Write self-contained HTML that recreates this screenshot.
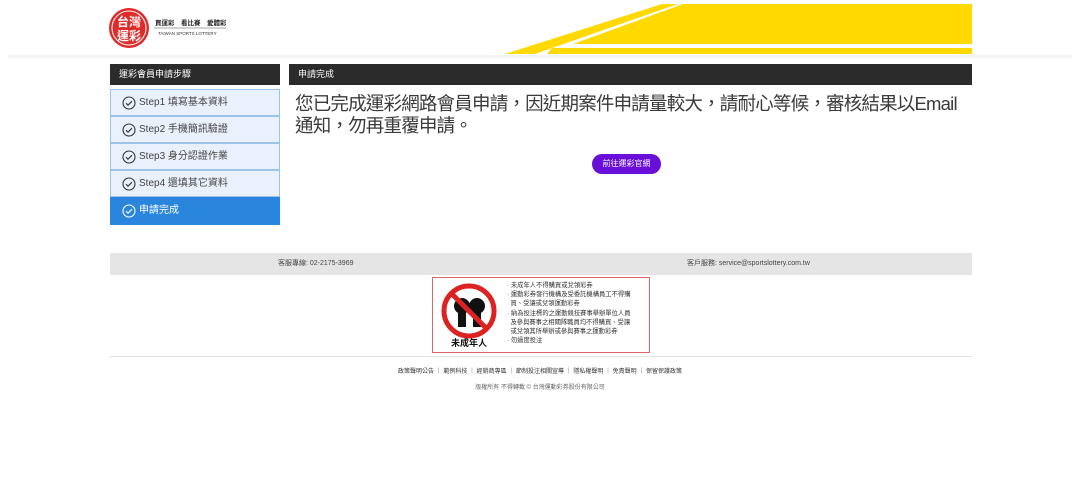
<!DOCTYPE html>
<html><head><meta charset="utf-8"><style>
*{margin:0;padding:0;box-sizing:border-box}
body{width:1080px;height:500px;background:#fff;font-family:"Liberation Sans","Noto Sans CJK TC",sans-serif;position:relative;overflow:hidden;color:#333}
.abs{position:absolute}
.hdrline{left:8px;top:55px;width:1064px;height:3px;background:#f3f3f3}
.bar{background:#2b2b2b;color:#fff;font-size:9px;line-height:21px;padding-left:9px}
.step{position:absolute;left:110px;width:170px;height:27px;background:#e9f2fc;border:1px solid #9cc3e8;font-size:10px;color:#444;line-height:26px;padding-left:28px}
.step svg{position:absolute;left:11px;top:6px}
.step.act{background:#2a86dc;color:#fff;border-color:#2a86dc}
.msg{left:295px;top:93px;font-size:18.5px;letter-spacing:-0.8px;line-height:22px;color:#3a3a3a;white-space:nowrap}
.btn{left:592px;top:154px;width:69px;height:20px;border-radius:10px;background:#6a0fd9;color:#fff;font-size:8px;text-align:center;line-height:20px}
.foot{left:110px;top:253px;width:862px;height:22px;background:#e5e5e5;font-size:7px;color:#444;line-height:22px}
.warn{left:432px;top:277px;width:218px;height:76px;border:1px solid #d66;background:#fff}
.warn ul{position:absolute;left:74px;top:3px;list-style:none;font-size:6.3px;line-height:9.2px;color:#333}
.links{left:0;width:1080px;top:366px;text-align:center;font-size:6px;color:#333}
.copy{left:0;width:1080px;top:382px;text-align:center;font-size:6px;color:#666}
</style></head><body>
<svg class="abs" style="left:0;top:0" width="1080" height="60">
<circle cx="129" cy="28" r="20" fill="#e02b2b"/>
<circle cx="129" cy="28" r="17" fill="none" stroke="#fff" stroke-width="1"/>
<text x="129" y="26" fill="#fff" font-size="12" font-weight="bold" text-anchor="middle" font-family="Noto Sans CJK TC">台灣</text>
<text x="129" y="40" fill="#fff" font-size="12" font-weight="bold" text-anchor="middle" font-family="Noto Sans CJK TC">運彩</text>
<text x="155" y="25" fill="#222" font-size="6.5" font-weight="bold" font-family="Noto Sans CJK TC">買運彩　看比賽　愛體彩</text>
<line x1="154" y1="28" x2="226" y2="28" stroke="#888" stroke-width="0.8"/>
<text x="158" y="35" fill="#333" font-size="4.5" font-family="Liberation Sans">TAIWAN SPORTS LOTTERY</text>
<polygon points="505,54 662,4 678,4 535,54" fill="#ffd900"/>
<polygon points="573,44 683,4 972,4 972,44" fill="#ffd900"/>
<polygon points="552,48 972,48 972,54 547,54" fill="#ffd900"/>
</svg>
<div class="abs hdrline"></div>
<div class="abs bar" style="left:110px;top:64px;width:170px">運彩會員申請步驟</div>
<div class="abs bar" style="left:289px;top:64px;width:683px">申請完成</div>
<div class="step" style="top:89px"><svg width="14" height="14"><circle cx="7" cy="7" r="6" fill="none" stroke="#333" stroke-width="1.1"/><path d="M4 7.2l2 2 4-4" fill="none" stroke="#333" stroke-width="1.1"/></svg>Step1 填寫基本資料</div>
<div class="step" style="top:116px"><svg width="14" height="14"><circle cx="7" cy="7" r="6" fill="none" stroke="#333" stroke-width="1.1"/><path d="M4 7.2l2 2 4-4" fill="none" stroke="#333" stroke-width="1.1"/></svg>Step2 手機簡訊驗證</div>
<div class="step" style="top:143px"><svg width="14" height="14"><circle cx="7" cy="7" r="6" fill="none" stroke="#333" stroke-width="1.1"/><path d="M4 7.2l2 2 4-4" fill="none" stroke="#333" stroke-width="1.1"/></svg>Step3 身分認證作業</div>
<div class="step" style="top:170px"><svg width="14" height="14"><circle cx="7" cy="7" r="6" fill="none" stroke="#333" stroke-width="1.1"/><path d="M4 7.2l2 2 4-4" fill="none" stroke="#333" stroke-width="1.1"/></svg>Step4 還填其它資料</div>
<div class="step act" style="top:197px;height:28px"><svg width="14" height="14"><circle cx="7" cy="7" r="6" fill="none" stroke="#fff" stroke-width="1.1"/><path d="M4 7.2l2 2 4-4" fill="none" stroke="#fff" stroke-width="1.1"/></svg>申請完成</div>
<div class="abs msg">您已完成運彩網路會員申請，因近期案件申請量較大，請耐心等候，審核結果以Email<br>通知，勿再重覆申請。</div>
<div class="abs btn">前往運彩官網</div>
<div class="abs foot"><span class="abs" style="left:168px">客服專線: 02-2175-3969</span><span class="abs" style="left:577px">客戶服務: service@sportslottery.com.tw</span></div>
<div class="abs warn">
<svg class="abs" style="left:6px;top:3px" width="60" height="70"><circle cx="30" cy="30" r="25" fill="none" stroke="#d22" stroke-width="5"/><circle cx="23" cy="25" r="8" fill="#111"/><circle cx="38" cy="25" r="8" fill="#111"/><rect x="19" y="32" width="8" height="14" fill="#111"/><rect x="34" y="32" width="8" height="14" fill="#111"/><line x1="12" y1="12" x2="48" y2="48" stroke="#d22" stroke-width="5"/><text x="30" y="65" font-size="9" font-weight="bold" text-anchor="middle" fill="#111" font-family="Noto Sans CJK TC">未成年人</text></svg>
<ul><li>· 未成年人不得購買或兌領彩券</li><li>· 運動彩券發行機構及受委託機構員工不得購</li><li>&nbsp;&nbsp;買、受讓或兌領運動彩券</li><li>· 納為投注標的之運動競技賽事舉辦單位人員</li><li>&nbsp;&nbsp;及參與賽事之相關隊職員均不得購買、受讓</li><li>&nbsp;&nbsp;或兌領其所舉辦或參與賽事之運動彩券</li><li>· 勿過度投注</li></ul>
</div>
<div class="abs" style="left:110px;top:356px;width:862px;height:1px;background:#e5e5e5"></div>
<div class="abs links">政策聲明公告 ｜ 範例科技 ｜ 經銷商專區 ｜ 節制投注相關宣導 ｜ 隱私權聲明 ｜ 免責聲明 ｜ 保留保護政策</div>
<div class="abs copy">版權所有 不得轉載 © 台灣運動彩券股份有限公司</div>
</body></html>
